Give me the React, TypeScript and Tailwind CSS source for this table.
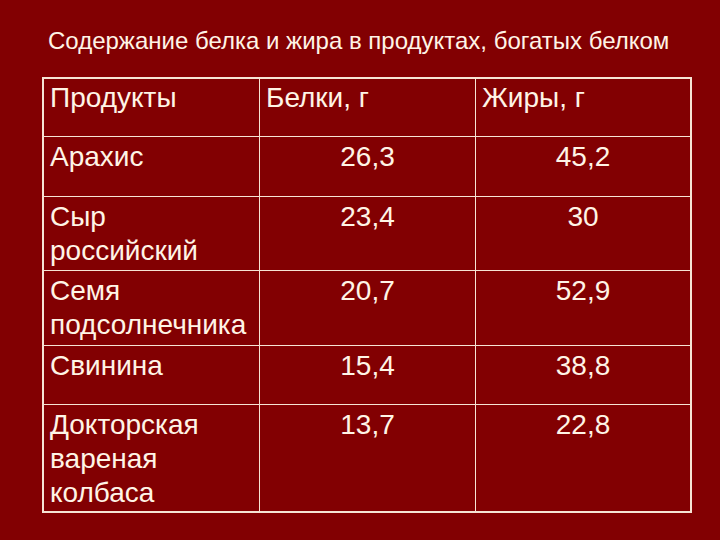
import React from "react";

const rows: { name: string[]; b: string; f: string; h: string }[] = [
  { name: ["Арахис"], b: "26,3", f: "45,2", h: "h-[60px]" },
  { name: ["Сыр", "российский"], b: "23,4", f: "30", h: "h-[74px]" },
  { name: ["Семя", "подсолнечника"], b: "20,7", f: "52,9", h: "h-[75px]" },
  { name: ["Свинина"], b: "15,4", f: "38,8", h: "h-[59px]" },
  { name: ["Докторская", "вареная", "колбаса"], b: "13,7", f: "22,8", h: "h-[106px]" },
];

export default function App() {
  return (
    <div
      className="w-[720px] h-[540px] bg-[#820002] text-[#fff4e6] overflow-hidden"
      style={{ fontFamily: '"Liberation Sans", Arial, sans-serif' }}
    >
      <div className="pt-[27px] pl-[48px] text-[24px] leading-[28px]">
        Содержание белка и жира в продуктах, богатых белком
      </div>
      <div className="ml-[42px] mt-[22px] w-[650px] border-2 border-[#f6e4d4] text-[28px] leading-[34px]">
        <div className="grid grid-cols-[216px_216px_1fr] h-[58px] border-b border-[#f6e4d4]">
          <div className="pl-[6px] pt-[2px] border-r border-[#f6e4d4]">Продукты</div>
          <div className="pl-[6px] pt-[2px] border-r border-[#f6e4d4]">Белки, г</div>
          <div className="pl-[6px] pt-[2px]">Жиры, г</div>
        </div>
        {rows.map((r, i) => (
          <div
            key={i}
            className={`grid grid-cols-[216px_216px_1fr] ${r.h} ${i < rows.length - 1 ? "border-b border-[#f6e4d4]" : ""}`}
          >
            <div className="pl-[6px] pt-[3px] border-r border-[#f6e4d4]">
              {r.name.map((n, j) => (
                <div key={j}>{n}</div>
              ))}
            </div>
            <div className="pt-[3px] text-center border-r border-[#f6e4d4]">{r.b}</div>
            <div className="pt-[3px] text-center">{r.f}</div>
          </div>
        ))}
      </div>
    </div>
  );
}
